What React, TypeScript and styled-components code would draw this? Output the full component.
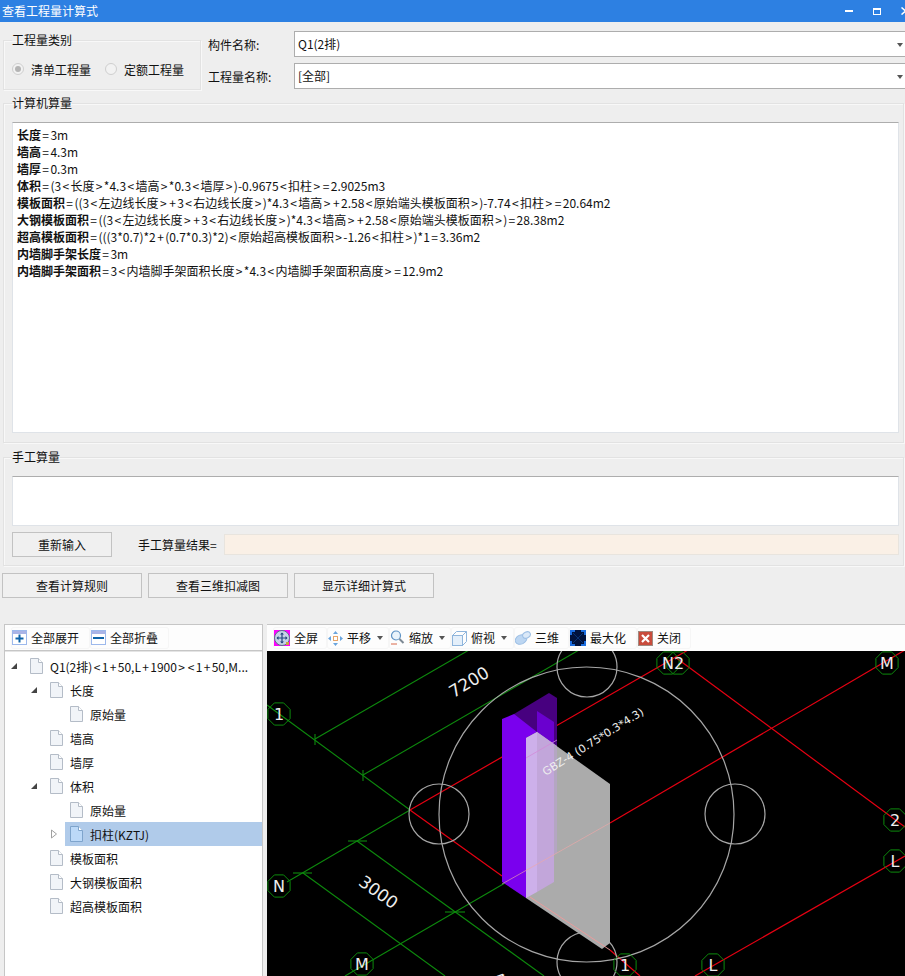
import React from "react";
import styled, { createGlobalStyle } from "styled-components";

const Global = createGlobalStyle`
  html, body { margin: 0; padding: 0; background: #eeeeee; }
  body { font-family: "Noto Sans CJK SC", "Liberation Sans", sans-serif; font-size: 12px; color: #111; }
`;

const Page = styled.div`
  width: 905px; height: 976px; overflow: hidden; display: flex; flex-direction: column; background: #eeeeee;
`;
const TitleBar = styled.div`
  height: 22px; flex: none; background: #2d80e2; color: #fff; display: flex; align-items: center;
  justify-content: space-between; padding-left: 2px; font-size: 12px; line-height: 18px;
`;
const WinControls = styled.div`
  display: flex; align-items: center; gap: 20px; margin-right: -5px;
  svg { display: block; }
`;
const TopRow = styled.div`
  flex: none; height: 73px; display: flex; padding-left: 3px;
`;
const Group = styled.fieldset`
  margin: 0; padding: 0 4px 0 8px; border: 1px solid #e2e2e2; box-shadow: inset 1px 1px 0 #f8f8f8, 1px 1px 0 #f8f8f8;
  box-sizing: border-box; min-width: 0;
  legend { padding: 0; margin-left: 0; font-size: 12px; line-height: 15px; height: 17px; }
`;
const KindGroup = styled(Group)`
  width: 198px; height: 58px; margin-top: 10px; padding: 0 0 0 8px;
  display: block;
`;
const RadioRow = styled.div`
  display: flex; align-items: center; padding-top: 11px; height: 18px;
`;
const Radio = styled.span<{ $on?: boolean }>`
  width: 12px; height: 12px; border-radius: 50%; border: 1px solid #cfcfcf; background: #f2f2f2; box-sizing: border-box;
  display: flex; align-items: center; justify-content: center; flex: none;
  &::after { content: ""; width: 6px; height: 6px; border-radius: 50%; background: ${p => (p.$on ? "#b4b4b4" : "transparent")}; }
`;
const RadioLabel = styled.span<{ $w: number }>`
  margin-left: 7px; width: ${p => p.$w}px; white-space: nowrap;
`;
const FormCol = styled.div`
  flex: 1; margin-left: 7px; padding-top: 9px; display: flex; flex-direction: column; gap: 6px; min-width: 0;
`;
const FormRow = styled.div`
  display: flex; align-items: center; height: 26px;
`;
const FormLabel = styled.label`
  width: 86px; flex: none;
`;
const Combo = styled.div`
  position: relative; flex: 1; height: 26px; box-sizing: border-box; background: #fff; border: 1px solid #adadad;
  border-width: 1px 0 1px 1px; padding-left: 3px; line-height: 23px;
  &::after { content: ""; position: absolute; right: 2px; top: 11px; border: 3.5px solid transparent; border-top: 4px solid #555; border-bottom: 0; }
`;
const CalcGroup = styled(Group)`
  flex: none; margin-left: 3px; width: 901px; height: 348px; padding-top: 10px;
`;
const FormulaBox = styled.div`
  height: 311px; box-sizing: border-box; width: 887px; background: #fff; border: 1px solid #dfe3e8; border-top-color: #adadad; border-left-color: #dfe3e8;
  padding: 3px 4px; line-height: 17px; font-size: 12px;
  div { white-space: nowrap; }
  b { font-weight: 700; }
`;
const Op = styled.span`
  padding: 0 1.35px;
`;
const ManualGroup = styled(Group)`
  flex: none; margin-left: 3px; margin-top: 6px; width: 901px; height: 117px; padding-top: 10px;
`;
const ManualBox = styled.div`
  height: 50px; width: 887px; box-sizing: border-box; background: #fff; border: 1px solid #dfe3e8; border-top-color: #adadad;
`;
const ManualRow = styled.div`
  display: flex; align-items: center; margin-top: 6px; height: 25px; width: 887px;
`;
const Btn = styled.button<{ $w: number }>`
  width: ${p => p.$w}px; height: 25px; flex: none; box-sizing: border-box; border: 1px solid #c2c2c2; background: #f0f0f0;
  font: inherit; color: #111; padding: 0; line-height: 22px;
`;
const ResultLabel = styled.span`
  margin-left: 26px; width: 86px; flex: none; white-space: nowrap;
`;
const ResultBox = styled.div`
  flex: 1; height: 21px; background: #faf0e6; border: 1px solid #e8e4de; box-sizing: border-box;
`;
const BtnRow = styled.div`
  flex: none; display: flex; gap: 6px; margin: 7px 0 0 2px;
`;
const Bottom = styled.div`
  flex: 1; min-height: 0; margin: 26px 0 0 4px; display: flex; gap: 4px;
`;
const LeftPanel = styled.div`
  width: 259px; flex: none; display: flex; flex-direction: column; background: #fff; border: 1px solid #c6c6c6; border-bottom: 0; box-sizing: border-box;
`;
const RightPanel = styled.div`
  flex: 1; min-width: 0; display: flex; flex-direction: column; background: #fff; border: 1px solid #c6c6c6; border-width: 1px 0 0 0;
`;
const Toolbar = styled.div`
  height: 26px; flex: none; display: flex; align-items: center; background: #fdfdfd;
  box-sizing: border-box; padding-left: ${(p: { $pad?: number }) => p.$pad ?? 6}px;
`;
const LeftToolbar = styled(Toolbar)`
  border-bottom: 1px solid #c6c6c6;
`;
const ToolBtn = styled.div<{ $w: number }>`
  width: ${p => p.$w}px; height: 22px; box-sizing: border-box; flex: none; display: flex; align-items: center; gap: 4px;
  padding-left: 1px; border-radius: 3px; box-shadow: 0 0 0 1px #f6f6f6 inset; white-space: nowrap; line-height: 22px;
  svg { flex: none; display: block; }
`;
const Caret = styled.span`
  margin-left: 2px; border: 3px solid transparent; border-top: 4px solid #555; border-bottom: 0; flex: none;
`;
const Tree = styled.div`
  flex: 1; padding-top: 2px; border-top: 1px solid #e4e4e4; background: #fff;
`;
const TreeRow = styled.div<{ $level: number }>`
  height: 24px; display: flex; align-items: center; padding-left: ${p => p.$level * 20 + 5}px;
`;
const Arrow = styled.span`
  width: 15px; flex: none; display: flex; align-items: center;
  svg { display: block; }
`;
const TreeItem = styled.div<{ $sel?: boolean }>`
  flex: 1; min-width: 0; height: 24px; display: flex; align-items: center; padding-left: 5px; gap: 7px; white-space: nowrap;
  background: ${p => (p.$sel ? "#b0cbea" : "transparent")};
  svg { flex: none; display: block; }
`;
const Canvas = styled.svg`
  display: block; flex: 1; width: 638px; height: 325px; background: #000;
`;

const Min = () => <svg width="8" height="2"><rect width="8" height="2" fill="#fff" /></svg>;
const Max = () => <svg width="8" height="7"><rect x=".5" y=".5" width="7" height="6" fill="none" stroke="#fff" /><rect width="8" height="2" fill="#fff" /></svg>;
const CloseX = () => <svg width="9" height="8"><path d="M.5.5l8 7M8.5.5l-8 7" stroke="#fff" strokeWidth="1.5" /></svg>;

const FileIcon = ({ sel }: { sel?: boolean }) => (
  <svg width="13" height="16" viewBox="0 0 13 16">
    <path d="M.5.5h8l4 4v11H.5z" fill={sel ? "#bcd9f8" : "#f1f4f8"} stroke={sel ? "#7ea4cc" : "#b4bcc7"} />
    <path d="M8.5.5v4h4" fill="#fff" stroke={sel ? "#7ea4cc" : "#b4bcc7"} />
  </svg>
);
const Open = () => <svg width="10" height="8" viewBox="0 0 10 8"><path d="M1 7L7 1v6z" fill="#444" /></svg>;
const Closed = () => <svg width="10" height="10" viewBox="0 0 10 10"><path d="M1.5 1l5 4-5 4z" fill="#fff" stroke="#a0a0a0" /></svg>;

const PlusBox = ({ minus }: { minus?: boolean }) => (
  <svg width="15" height="15" viewBox="0 0 15 15">
    <rect x=".5" y=".5" width="14" height="14" fill="#fff" stroke="#9db9ec" />
    <rect x="1" y="1" width="13" height="3" fill="#aab4e6" />
    {minus ? <rect x="2" y="7" width="11" height="2" fill="#0d63a8" /> : <path d="M6.5 4.5h2v3h3v2h-3v3h-2v-3h-3v-2h3z" fill="#0d63a8" />}
  </svg>
);
const FullIcon = () => (
  <svg width="16" height="16" viewBox="0 0 16 16">
    <rect width="16" height="16" fill="#ff00ff" />
    <circle cx="8" cy="8" r="7.5" fill="#c5d2e6" stroke="#5d6f8c" />
    <path d="M8 3v10M3 8h10" stroke="#25477f" strokeWidth="1.2" />
    <path d="M8 2.5l-2 2h4zM8 13.5l-2-2h4zM2.5 8l2-2v4zM13.5 8l-2-2v4z" fill="#25477f" />
    <rect x="12" y="12" width="3" height="3" fill="#c9a640" />
  </svg>
);
const PanIcon = () => (
  <svg width="15" height="15" viewBox="0 0 15 15">
    <rect x="5.5" y="5.5" width="4" height="4" fill="#fff" stroke="#e8a66a" />
    <path d="M7.5 0l-2.5 3h5zM7.5 15l-2.5-3h5zM0 7.5l3-2.5v5zM15 7.5l-3-2.5v5z" fill="#6aa5de" />
  </svg>
);
const ZoomIcon = () => (
  <svg width="15" height="16" viewBox="0 0 15 16">
    <circle cx="6" cy="5.5" r="4.5" fill="#e9f3fb" stroke="#5e92c4" strokeWidth="1.2" />
    <path d="M9.5 9l4 4" stroke="#7d8994" strokeWidth="2" />
    <path d="M1 14h6" stroke="#d8694a" />
  </svg>
);
const CubeIcon = () => (
  <svg width="15" height="15" viewBox="0 0 15 15" fill="none" stroke="#8fb5dc">
    <rect x=".5" y="4.5" width="10" height="10" fill="#e4effa" />
    <path d="M.5 4.5l4-4h10v10l-4 4M10.5 4.5l4-4" />
  </svg>
);
const ThreeDIcon = () => (
  <svg width="16" height="14" viewBox="0 0 16 14">
    <ellipse cx="6" cy="8.5" rx="6" ry="4.5" transform="rotate(-25 6 8.5)" fill="#bcd6f2" stroke="#9dbfe4" />
    <ellipse cx="11.5" cy="4" rx="4" ry="3" transform="rotate(-25 11.5 4)" fill="#dbe9f8" stroke="#9dbfe4" />
  </svg>
);
const MaxIcon = () => (
  <svg width="16" height="16" viewBox="0 0 16 16">
    <rect width="16" height="16" fill="#00123c" />
    <path d="M1 5V1h4M11 1h4v4M15 11v4h-4M5 15H1v-4" fill="none" stroke="#1c6ee0" strokeWidth="2" />
    <path d="M3 3l10 10M13 3L3 13" stroke="#0a3a80" strokeWidth=".8" />
  </svg>
);
const CloseIcon = () => (
  <svg width="15" height="15" viewBox="0 0 15 15">
    <rect x=".5" y=".5" width="14" height="14" fill="#c94c3c" stroke="#a08a80" />
    <path d="M4 4l7 7M11 4l-7 7" stroke="#fff" strokeWidth="2.2" />
  </svg>
);

const withOps = (s: string) =>
  s.split(/([<>=+])/).map((p, i) => (i % 2 ? <Op key={i}>{p}</Op> : p));

const formulas: [string, string][] = [
  ["长度", "=3m"],
  ["墙高", "=4.3m"],
  ["墙厚", "=0.3m"],
  ["体积", "=(3<长度>*4.3<墙高>*0.3<墙厚>)-0.9675<扣柱>=2.9025m3"],
  ["模板面积", "=((3<左边线长度>+3<右边线长度>)*4.3<墙高>+2.58<原始端头模板面积>)-7.74<扣柱>=20.64m2"],
  ["大钢模板面积", "=((3<左边线长度>+3<右边线长度>)*4.3<墙高>+2.58<原始端头模板面积>)=28.38m2"],
  ["超高模板面积", "=(((3*0.7)*2+(0.7*0.3)*2)<原始超高模板面积>-1.26<扣柱>)*1=3.36m2"],
  ["内墙脚手架长度", "=3m"],
  ["内墙脚手架面积", "=3<内墙脚手架面积长度>*4.3<内墙脚手架面积高度>=12.9m2"],
];

type Node = { t: string; l: number; a?: "open" | "closed"; sel?: boolean };
const nodes: Node[] = [
  { t: "Q1(2排)<1+50,L+1900><1+50,M...", l: 0, a: "open" },
  { t: "长度", l: 1, a: "open" },
  { t: "原始量", l: 2 },
  { t: "墙高", l: 1 },
  { t: "墙厚", l: 1 },
  { t: "体积", l: 1, a: "open" },
  { t: "原始量", l: 2 },
  { t: "扣柱(KZTJ)", l: 2, a: "closed", sel: true },
  { t: "模板面积", l: 1 },
  { t: "大钢模板面积", l: 1 },
  { t: "超高模板面积", l: 1 },
];

const octagon = (cx: number, cy: number, r = 12) =>
  Array.from({ length: 8 }, (_, i) => {
    const a = ((i + 0.5) * Math.PI) / 4;
    return `${(cx + r * Math.cos(a)).toFixed(1)},${(cy + r * Math.sin(a)).toFixed(1)}`;
  }).join(" ");

const green = "#0d8a0d";
const red = "#e60012";
const greenLines = [
  [267, 705, 410, 810], [315, 739, 469, 650], [363, 775, 579, 650], [287, 882, 410, 810],
  [303, 873, 445, 976], [357, 841, 544, 976], [345, 976, 505, 883],
  [315, 734, 315, 745], [363, 770, 363, 781], [293, 873, 312, 873], [348, 841, 367, 841], [445, 912, 465, 912],
];
const redLines = [
  [410, 810, 688, 650], [410, 810, 502, 876], [610, 950, 640, 976], [905, 650, 610, 823],
  [675, 657, 905, 827], [695, 976, 905, 856],
];
const hexes: [string, number, number][] = [
  ["1", 279, 714], ["N", 279, 886], ["M", 362, 964], ["M", 887, 663], ["2", 895, 820], ["L", 895, 861], ["L", 713, 965], ["1", 625, 965],
];

const Drawing = () => (
  <Canvas viewBox="267 651 638 325" preserveAspectRatio="xMinYMin slice">
    <rect x="267" y="651" width="638" height="325" fill="#000" />
    {greenLines.map((l, i) => <line key={i} x1={l[0]} y1={l[1]} x2={l[2]} y2={l[3]} stroke={green} strokeWidth="1.1" />)}
    {redLines.map((l, i) => <line key={i} x1={l[0]} y1={l[1]} x2={l[2]} y2={l[3]} stroke={red} strokeWidth="1.2" />)}
    <g fill="none" stroke="#a6a6a6" strokeWidth="1.2">
      <circle cx="586.5" cy="814.5" r="147.5" />
      <circle cx="439" cy="814" r="30" />
      <circle cx="735" cy="814" r="30" />
      <circle cx="587" cy="667" r="30" />
      <circle cx="587" cy="962" r="30" />
    </g>
    {/* wall */}
    <polygon points="514,714 549,693 557,698 557,853 526,880" fill="#47007f" />
    <polygon points="537,711 554,722 554,882 537,892" fill="#6a00cf" />
    <polygon points="502,719 514,714 537,732 526,738 526,898 502,882" fill="#7a00ee" />
    <polygon points="526,738 537,732 610,784 610,943 602,949 526,898" fill="#ababab" />
    <polygon points="526,738 537,732 537,892 526,898" fill="#cdb0ea" />
    <polygon points="537,732 554,744 554,882 537,892" fill="#c2a6da" />
    <polygon points="554,744 557,746 557,853 554,855" fill="#b4a6c2" />
    <line x1="530" y1="897" x2="610" y2="950" stroke="#f09a9a" strokeWidth=".9" />
    <line x1="502" y1="884" x2="610" y2="823" stroke="#f0a8a8" strokeWidth=".8" opacity=".8" />
    <line x1="526" y1="758" x2="557" y2="740" stroke="#d28ad8" strokeWidth=".8" />
    {hexes.map(([t, x, y], i) => (
      <g key={i}>
        <polygon points={octagon(x, y)} fill="none" stroke={green} strokeWidth="1" />
        <text x={x} y={y + 6} textAnchor="middle" fontFamily="'DejaVu Sans', sans-serif" fontSize="16" fill="#eee">{t}</text>
      </g>
    ))}
    <polygon points={octagon(668, 663)} fill="none" stroke={green} />
    <polygon points={octagon(678, 663)} fill="none" stroke={green} />
    <text x="673" y="669" textAnchor="middle" fontFamily="'DejaVu Sans', sans-serif" fontSize="16" fill="#eee">N2</text>
    <g fontFamily="'DejaVu Sans', sans-serif" fill="#eee" textAnchor="middle">
      <text transform="translate(472,687) rotate(-31)" fontSize="17">7200</text>
      <text transform="translate(375,897) rotate(36)" fontSize="17">3000</text>
      <text transform="translate(508,993) rotate(36)" fontSize="17">4200</text>
      <text transform="translate(595,745) rotate(-32)" fontSize="11">GBZ-4 (0.75*0.3*4.3)</text>
    </g>
  </Canvas>
);

export default function App() {
  return (
    <Page>
      <Global />
      <TitleBar>
        <span>查看工程量计算式</span>
        <WinControls><Min /><Max /><CloseX /></WinControls>
      </TitleBar>
      <TopRow>
        <KindGroup>
          <legend>工程量类别</legend>
          <RadioRow>
            <Radio $on /><RadioLabel $w={74}>清单工程量</RadioLabel>
            <Radio /><RadioLabel $w={62}>定额工程量</RadioLabel>
          </RadioRow>
        </KindGroup>
        <FormCol>
          <FormRow><FormLabel>构件名称:</FormLabel><Combo>Q1(2排)</Combo></FormRow>
          <FormRow><FormLabel>工程量名称:</FormLabel><Combo>[全部]</Combo></FormRow>
        </FormCol>
      </TopRow>
      <CalcGroup>
        <legend>计算机算量</legend>
        <FormulaBox>
          {formulas.map(([k, v], i) => <div key={i}><b>{k}</b>{withOps(v)}</div>)}
        </FormulaBox>
      </CalcGroup>
      <ManualGroup>
        <legend>手工算量</legend>
        <ManualBox />
        <ManualRow>
          <Btn $w={100}>重新输入</Btn>
          <ResultLabel>手工算量结果=</ResultLabel>
          <ResultBox />
        </ManualRow>
      </ManualGroup>
      <BtnRow>
        <Btn $w={140}>查看计算规则</Btn>
        <Btn $w={140}>查看三维扣减图</Btn>
        <Btn $w={140}>显示详细计算式</Btn>
      </BtnRow>
      <Bottom>
        <LeftPanel>
          <LeftToolbar $pad={6}>
            <ToolBtn $w={79}><PlusBox />全部展开</ToolBtn>
            <ToolBtn $w={79}><PlusBox minus />全部折叠</ToolBtn>
          </LeftToolbar>
          <Tree>
            {nodes.map((n, i) => (
              <TreeRow key={i} $level={n.l}>
                <Arrow>{n.a === "open" ? <Open /> : n.a === "closed" ? <Closed /> : null}</Arrow>
                <TreeItem $sel={n.sel}><FileIcon sel={n.sel} /><span>{withOps(n.t)}</span></TreeItem>
              </TreeRow>
            ))}
          </Tree>
        </LeftPanel>
        <RightPanel>
          <Toolbar $pad={6}>
            <ToolBtn $w={54}><FullIcon />全屏</ToolBtn>
            <ToolBtn $w={62}><PanIcon />平移<Caret /></ToolBtn>
            <ToolBtn $w={62}><ZoomIcon />缩放<Caret /></ToolBtn>
            <ToolBtn $w={63}><CubeIcon />俯视<Caret /></ToolBtn>
            <ToolBtn $w={55}><ThreeDIcon />三维</ToolBtn>
            <ToolBtn $w={68}><MaxIcon />最大化</ToolBtn>
            <ToolBtn $w={54}><CloseIcon />关闭</ToolBtn>
          </Toolbar>
          <Drawing />
        </RightPanel>
      </Bottom>
    </Page>
  );
}
